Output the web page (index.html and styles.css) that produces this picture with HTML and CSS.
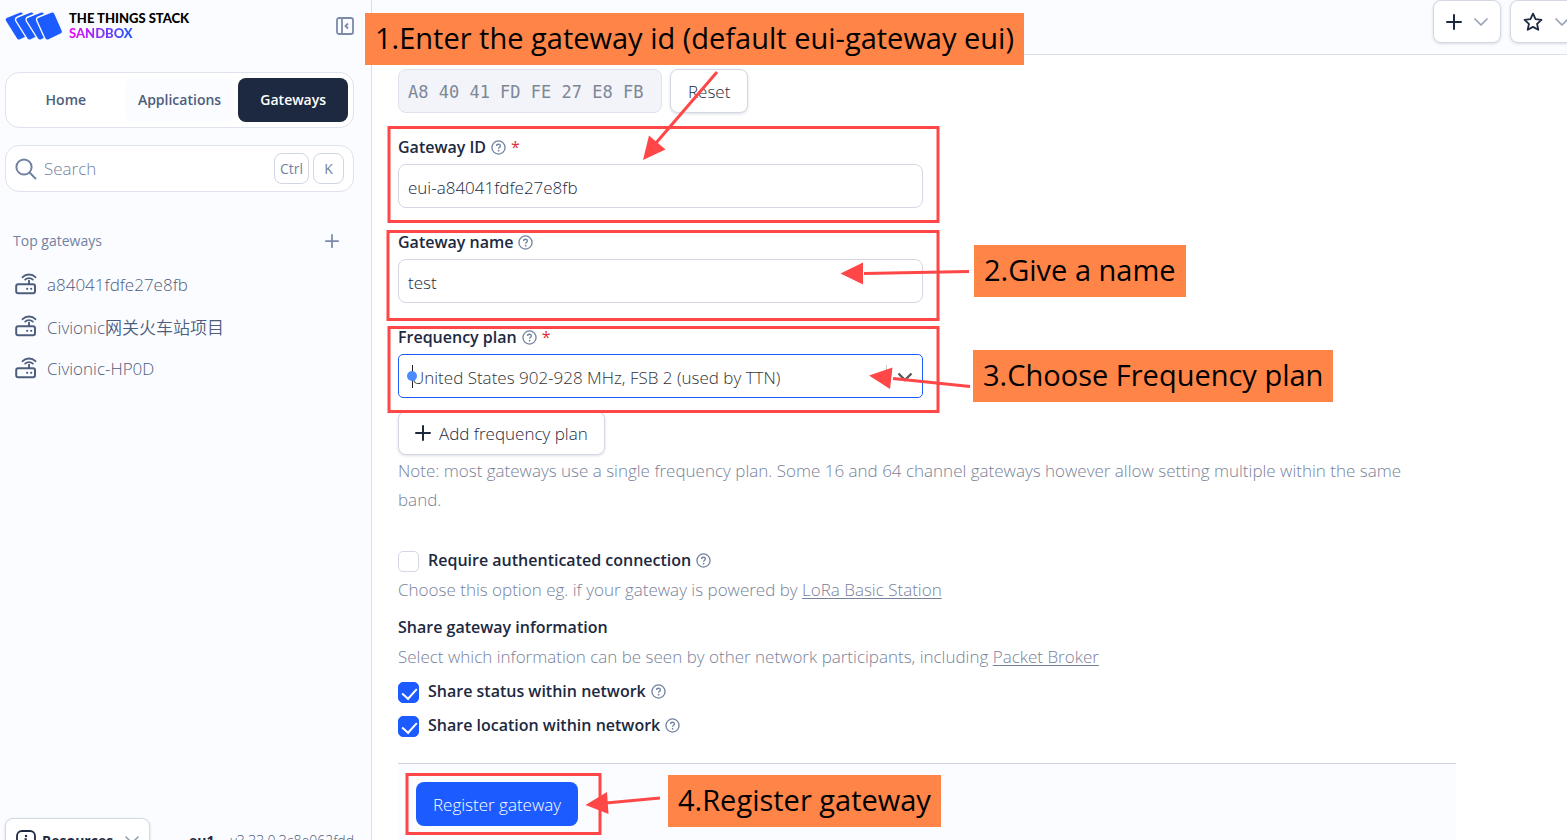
FILE: index.html
```
<!DOCTYPE html>
<html lang="en">
    <head>
        <title>Register gateway - The Things Stack Sandbox</title>
        <meta charset="UTF-8">
        <meta name="viewport" content="width=device-width, initial-scale=1.0">
        <link rel="stylesheet" href="styles.css">
    </head>
    <body>
        <!-- Shared icons -->
        <svg class="sprite" aria-hidden="true">
            <symbol id="icon-help" viewBox="0 0 16 16">
                <circle cx="8" cy="8" r="7" fill="none" stroke="currentColor" stroke-width="1.4"/>
                <path d="M6 6.4C6 5.2 6.8 4.5 8 4.5s2 .8 2 1.8c0 1.3-1.9 1.4-1.9 2.9" fill="none" stroke="currentColor" stroke-width="1.4"/>
                <circle cx="8.1" cy="11.4" r=".9" fill="currentColor"/>
            </symbol>
            <symbol id="icon-plus" viewBox="0 0 16 16">
                <path d="M8 1v14M1 8h14" fill="none" stroke="currentColor" stroke-width="2" stroke-linecap="round"/>
            </symbol>
            <symbol id="icon-chevron" viewBox="0 0 14 8">
                <path d="M1 1l6 6 6-6" fill="none" stroke="currentColor" stroke-width="1.7" stroke-linecap="round" stroke-linejoin="round"/>
            </symbol>
            <symbol id="icon-gateway" viewBox="0 0 22 22">
                <rect x="1.2" y="11.2" width="18.8" height="9" rx="2" fill="none" stroke="currentColor" stroke-width="2"/>
                <path d="M14 11V7.6M10.2 6.6c2-2 5.600-2 7.600 0M7.600 4.200c3.400-3.600 9.400-3.600 12.800 0" fill="none" stroke="currentColor" stroke-width="1.9" stroke-linecap="round"/>
                <circle cx="12.2" cy="15.8" r="1.1" fill="currentColor"/>
                <circle cx="16.2" cy="15.8" r="1.1" fill="currentColor"/>
            </symbol>
        </svg>

        <aside class="sidebar">
            <div class="brand">
                <svg class="brand-mark" viewBox="0 0 58 30" aria-hidden="true">
                    <g fill="#1c5bff" stroke="#fbfcff" stroke-width="1.4">
                        <path d="M2 6L14.500 1q2.800-1 4 1.600l8.200 17.600q1.200 2.800-1.400 4l-10 4.700q-2.800 1.200-4-1.400L.4 10Q-.8 7.200 2 6z"/>
                        <path d="M12.500 6L25 1q2.800-1 4 1.600l8.200 17.600q1.200 2.800-1.400 4l-10 4.700q-2.800 1.200-4-1.400L10.900 10q-1.200-2.800 1.600-4z"/>
                        <path d="M23 6L35.500 1q2.800-1 4 1.600l8.200 17.600q1.200 2.800-1.400 4l-10 4.700q-2.800 1.200-4-1.400L21.400 10q-1.200-2.800 1.600-4z"/>
                        <path d="M33.500 6L46 1q2.800-1 4 1.600l7.200 16.600q1.200 2.800-1.400 4l-12 5.700q-2.800 1.200-4-1.400L31.900 10q-1.200-2.800 1.600-4z"/>
                    </g>
                </svg>
                <div class="brand-name">
                    <span>THE THINGS STACK</span>
                    <span class="brand-edition">SANDBOX</span>
                </div>
                <button class="collapse" aria-label="Collapse sidebar">
                    <svg viewBox="0 0 18 18" width="18" height="18">
                        <rect x="1" y="1" width="16" height="16" rx="2" fill="none" stroke="currentColor" stroke-width="1.8"/>
                        <path d="M6 1v16M12 6.500L9.500 9l2.500 2.500" fill="none" stroke="currentColor" stroke-width="1.800"/>
                    </svg>
                </button>
            </div>

            <nav class="tabs">
                <a href="#">Home</a>
                <a href="#" class="hovered">Applications</a>
                <a href="#" class="active">Gateways</a>
            </nav>

            <div class="search">
                <svg viewBox="0 0 22 22" width="22" height="22" aria-hidden="true">
                    <circle cx="9" cy="9" r="7.600" fill="none" stroke="currentColor" stroke-width="2"/>
                    <path d="M14.500 14.500L21 21" stroke="currentColor" stroke-width="2"/>
                </svg>
                <input type="text" placeholder="Search" aria-label="Search">
                <kbd>Ctrl</kbd>
                <kbd>K</kbd>
            </div>

            <div class="list-title">
                <span>Top gateways</span>
                <button aria-label="Add gateway"><svg width="14" height="14"><use href="#icon-plus"/></svg></button>
            </div>
            <ul class="gateways">
                <li><a href="#"><svg width="22" height="22"><use href="#icon-gateway"/></svg>a84041fdfe27e8fb</a></li>
                <li><a href="#"><svg width="22" height="22"><use href="#icon-gateway"/></svg>Civionic网关火车站项目</a></li>
                <li><a href="#"><svg width="22" height="22"><use href="#icon-gateway"/></svg>Civionic-HP0D</a></li>
            </ul>

            <div class="sidebar-footer">
                <button class="btn resources">
                    <svg viewBox="0 0 20 20" width="20" height="20" aria-hidden="true">
                        <rect x="1" y="1" width="18" height="18" rx="5" fill="none" stroke="currentColor" stroke-width="1.8"/>
                        <path d="M8.500 9H10v5.500M8 14.500h4" fill="none" stroke="currentColor" stroke-width="1.600"/>
                        <circle cx="10" cy="6" r="1.200" fill="currentColor"/>
                    </svg>
                    Resources
                    <svg class="chevron" width="14" height="8"><use href="#icon-chevron"/></svg>
                </button>
                <span class="cluster">eu1</span>
                <span class="version">v3.33.0.3c8e062fdd</span>
            </div>
        </aside>

        <main class="main">
            <header class="topbar">
                <button class="btn" aria-label="Add">
                    <svg width="16" height="16"><use href="#icon-plus"/></svg>
                    <svg class="chevron" width="14" height="8"><use href="#icon-chevron"/></svg>
                </button>
                <button class="btn" aria-label="Bookmarks">
                    <svg viewBox="0 0 22 22" width="20" height="20">
                        <path d="M11 1.800l2.800 6 6.500.8-4.800 4.500 1.300 6.500L11 16.400l-5.800 3.200 1.300-6.500L1.700 8.600l6.500-.8z" fill="none" stroke="currentColor" stroke-width="2" stroke-linejoin="round"/>
                    </svg>
                    <svg class="chevron" width="14" height="8"><use href="#icon-chevron"/></svg>
                </button>
            </header>

            <form class="form">
                <div class="eui-row">
                    <input type="text" class="eui" value="A8 40 41 FD FE 27 E8 FB" aria-label="Gateway EUI" disabled>
                    <button type="button" class="btn">Reset</button>
                </div>

                <div class="field">
                    <label for="gateway_id">Gateway ID <svg class="help"><use href="#icon-help"/></svg> <span class="required">*</span></label>
                    <input type="text" id="gateway_id" value="eui-a84041fdfe27e8fb">
                </div>

                <div class="field">
                    <label for="gateway_name">Gateway name <svg class="help"><use href="#icon-help"/></svg></label>
                    <input type="text" id="gateway_name" value="test">
                </div>

                <div class="field">
                    <label for="frequency_plan">Frequency plan <svg class="help"><use href="#icon-help"/></svg> <span class="required">*</span></label>
                    <div class="select">
                        <select id="frequency_plan">
                            <option>United States 902-928 MHz, FSB 2 (used by TTN)</option>
                        </select>
                        <span class="caret"></span>
                        <span class="divider"></span>
                        <svg class="arrow" viewBox="0 0 16 10" width="16" height="10"><path d="M1.500 1.500L8 8l6.500-6.500" fill="none" stroke="#595959" stroke-width="2.400"/></svg>
                    </div>
                </div>

                <button type="button" class="btn add-plan">
                    <svg width="16" height="16"><use href="#icon-plus"/></svg>
                    Add frequency plan
                </button>
                <p class="note">Note: most gateways use a single frequency plan. Some 16 and 64 channel gateways however allow setting multiple within the same band.</p>

                <div class="check">
                    <input type="checkbox" id="require_auth">
                    <label for="require_auth">Require authenticated connection <svg class="help"><use href="#icon-help"/></svg></label>
                </div>
                <p class="hint">Choose this option eg. if your gateway is powered by <a href="#">LoRa Basic Station</a></p>

                <h3>Share gateway information</h3>
                <p>Select which information can be seen by other network participants, including <a href="#">Packet Broker</a></p>
                <div class="check shared">
                    <input type="checkbox" id="share_status" checked>
                    <label for="share_status">Share status within network <svg class="help"><use href="#icon-help"/></svg></label>
                </div>
                <div class="check shared">
                    <input type="checkbox" id="share_location" checked>
                    <label for="share_location">Share location within network <svg class="help"><use href="#icon-help"/></svg></label>
                </div>

                <div class="submit-bar">
                    <button type="button" class="submit">Register gateway</button>
                </div>
            </form>

            <!-- Step by step marks over the form -->
            <svg class="marks" aria-hidden="true">
                <g fill="none" stroke="#ff4747" stroke-width="3">
                    <rect x="17" y="127.500" width="549" height="94"/>
                    <rect x="16" y="231.500" width="550" height="88"/>
                    <rect x="17" y="327.500" width="549" height="84"/>
                    <rect x="35" y="774.500" width="193" height="59"/>
                    <path d="M345 72L284 143M597 271.500L492 273.500M598 386.500L521 378.500M288 798L234 803"/>
                </g>
                <g fill="#ff4747">
                    <path d="M271 160l6-24.500 16.500 14z"/>
                    <path d="M468.500 273.500l22.500-11v22z"/>
                    <path d="M497 375.500l23.500-8-2.500 21.500z"/>
                    <path d="M213.500 805l21.500-13 1.500 22z"/>
                </g>
            </svg>
            <div class="callout step-1">1.Enter the gateway id (default eui-gateway eui)</div>
            <div class="callout step-2">2.Give a name</div>
            <div class="callout step-3">3.Choose Frequency plan</div>
            <div class="callout step-4">4.Register gateway</div>
        </main>
    </body>
</html>
```
FILE: styles.css
```
* {
    box-sizing: border-box;
}

body {
    display: flex;
    height: 100vh;
    margin: 0;
    overflow: hidden;
    background: #fff;
    color: #1d2940;
    font-family: "Open Sans", "Noto Sans CJK SC", sans-serif;
    font-size: 17px;
    font-weight: 350;
}

button, input, select {
    font: inherit;
    color: inherit;
}

button {
    cursor: pointer;
}

.sprite {
    display: none;
}

.btn {
    display: inline-flex;
    align-items: center;
    height: 44px;
    padding: 0 17px;
    background: #fff;
    border: 1px solid #d3d8e4;
    border-radius: 8px;
    box-shadow: 0 1px 3px rgba(29, 41, 64, 0.15);
}

.chevron {
    color: #98a3b8;
}

/* Sidebar */
.sidebar {
    display: flex;
    flex-direction: column;
    flex: none;
    width: 372px;
    padding: 8px 17px 0 5px;
    background: #fbfcff;
    border-right: 1px solid #dbdfe8;
    color: #4d5d7c;
}

.brand {
    display: flex;
    align-items: center;
    height: 36px;
}

.brand-mark {
    width: 58px;
    height: 30px;
}

.brand-name {
    display: flex;
    flex-direction: column;
    flex: 1;
    margin-left: 6px;
    color: #000;
    font-family: Lato, sans-serif;
    font-size: 13px;
    font-weight: 900;
    line-height: 15px;
}

.brand-edition {
    align-self: flex-start;
    background: linear-gradient(90deg, #f00af5, #1c5bff);
    background-clip: text;
    -webkit-background-clip: text;
    color: transparent;
}

.collapse, .list-title button {
    display: flex;
    padding: 0;
    background: none;
    border: none;
    color: #7c8aa8;
}

.tabs {
    display: flex;
    gap: 4px;
    margin-top: 28px;
    padding: 5px;
    background: #fff;
    border: 1px solid #dfe3eb;
    border-radius: 14px;
}

.tabs a {
    flex: 1;
    border-radius: 8px;
    color: inherit;
    font-size: 14px;
    font-weight: 600;
    line-height: 44px;
    text-align: center;
    text-decoration: none;
}

.tabs .hovered {
    background: #fbfcff;
}

.tabs .active {
    background: #1d2940;
    color: #fff;
}

.search {
    display: flex;
    align-items: center;
    gap: 4px;
    height: 47px;
    margin-top: 17px;
    padding: 0 9px;
    background: #fff;
    border: 1px solid #dfe3eb;
    border-radius: 14px;
    color: #7282a0;
}

.search input {
    flex: 1;
    min-width: 0;
    padding: 0 3px;
    background: none;
    border: none;
}

.search input::placeholder {
    color: #7282a0;
}

.search kbd {
    min-width: 31px;
    padding: 0 5px;
    border: 1px solid #d0d6e2;
    border-radius: 8px;
    font-family: inherit;
    font-size: 14px;
    font-weight: 400;
    line-height: 29px;
    text-align: center;
}

.list-title {
    display: flex;
    align-items: center;
    justify-content: space-between;
    margin-top: 37px;
    padding: 0 15px 0 8px;
    color: #7282a0;
    font-size: 14px;
    font-weight: 400;
    line-height: 24px;
}

.gateways {
    margin: 10px 0 0;
    padding: 0 10px;
    list-style: none;
}

.gateways a {
    display: flex;
    align-items: center;
    gap: 10px;
    height: 42px;
    color: inherit;
    text-decoration: none;
}

.sidebar-footer {
    display: flex;
    align-items: center;
    margin-top: auto;
    margin-bottom: -22px;
    font-size: 14px;
}

.resources {
    gap: 6px;
    padding: 0 10px;
    color: #1d2940;
    font-size: 14px;
    font-weight: 700;
}

.resources .chevron {
    margin-left: 6px;
}

.cluster {
    margin-left: auto;
    color: #1d2940;
    font-weight: 700;
}

.version {
    margin-left: 16px;
}

/* Main column */
.main {
    position: relative;
    flex: 1;
    min-width: 0;
}

.topbar {
    display: flex;
    justify-content: flex-end;
    gap: 9px;
    height: 55px;
    margin-right: -15px;
    background: #fbfcff;
    border-bottom: 1px solid #dbdfe8;
}

.topbar .btn {
    gap: 12px;
    height: 43px;
    padding: 0 12px;
}

.form {
    max-width: 1084px;
    padding: 14px 0 0 26px;
}

.eui-row {
    display: flex;
    gap: 8px;
}

.eui {
    width: 264px;
    height: 44px;
    padding: 2px 9px 0;
    background: #f2f4f9;
    border: 1px solid #dfe3eb;
    border-radius: 8px;
    color: #7d8797;
    font-family: "DejaVu Sans Mono", monospace;
}

.field {
    max-width: 525px;
    margin-top: 22px;
}

label, h3 {
    font-weight: 600;
    font-size: 16px;
}

.field label {
    display: flex;
    align-items: center;
    gap: 5px;
    height: 24px;
    margin-bottom: 5px;
}

.help {
    flex: none;
    width: 15px;
    height: 15px;
    color: #7282a0;
}

.required {
    color: #e02d3c;
    font-weight: 400;
}

.field input, .select select {
    width: 100%;
    height: 44px;
    padding: 2px 9px 0;
    background: #fff;
    border: 1px solid #d3d8e4;
    border-radius: 8px;
}

.select {
    position: relative;
}

.select select {
    appearance: none;
    padding-left: 13px;
    border-color: #1c5bff;
    border-radius: 5px;
    outline: none;
    color: #333;
}

/* Text cursor with its drag handle */
.caret {
    position: absolute;
    top: 11px;
    left: 14px;
    width: 1px;
    height: 23px;
    background: #222;
}

.caret::after {
    content: "";
    position: absolute;
    top: 6px;
    left: -5px;
    width: 10px;
    height: 10px;
    border-radius: 50%;
    background: #4a8cff;
}

.divider {
    position: absolute;
    top: 11px;
    right: 36px;
    width: 1px;
    height: 22px;
    background: #ccc;
}

.arrow {
    position: absolute;
    top: 18px;
    right: 10px;
}

.add-plan {
    gap: 8px;
    margin-top: 13px;
    padding: 0 16px;
}

.form p {
    margin: 0;
    color: #77829a;
    line-height: 29px;
}

.form p a {
    color: inherit;
    text-underline-offset: 2px;
}

.form .note {
    margin-top: 1px;
    padding-right: 24px;
}

.check {
    display: flex;
    align-items: center;
    gap: 9px;
    height: 28px;
    margin-top: 32px;
}

.check label {
    display: flex;
    align-items: center;
    gap: 5px;
}

.check input {
    appearance: none;
    position: relative;
    width: 21px;
    height: 21px;
    margin: 3px 0 0;
    background: #fff;
    border: 1px solid #d3d8e4;
    border-radius: 5px;
}

.check input:checked {
    background: #1c5bff;
    border-color: #1c5bff;
}

.check input:checked::after {
    content: "";
    position: absolute;
    top: 2px;
    left: 6px;
    width: 7px;
    height: 12px;
    border: solid #fff;
    border-width: 0 2px 2px 0;
    transform: rotate(42deg);
}

.form .hint {
    margin-top: 1px;
}

h3 {
    margin: 9px 0 0;
    line-height: 29px;
}

.check.shared {
    margin-top: 6px;
}

.submit-bar {
    margin-top: 24px;
    padding: 18px;
    background: #fbfcff;
    border-top: 1px solid #d0d5e2;
}

.submit {
    height: 44px;
    padding: 0 17px;
    background: #1c5bff;
    border: none;
    border-radius: 8px;
    color: #fff;
}

/* Marks and callouts */
.marks {
    position: absolute;
    top: 0;
    left: 0;
    width: 100%;
    height: 100%;
    pointer-events: none;
}

.callout {
    position: absolute;
    height: 52px;
    padding: 0 10px;
    background: #ff8447;
    color: #000;
    font-size: 29px;
    font-weight: 400;
    line-height: 49px;
    white-space: nowrap;
}

.step-1 {
    top: 13px;
    left: -7px;
}

.step-2 {
    top: 245px;
    left: 602px;
}

.step-3 {
    top: 350px;
    left: 601px;
}

.step-4 {
    top: 775px;
    left: 296px;
}
```
